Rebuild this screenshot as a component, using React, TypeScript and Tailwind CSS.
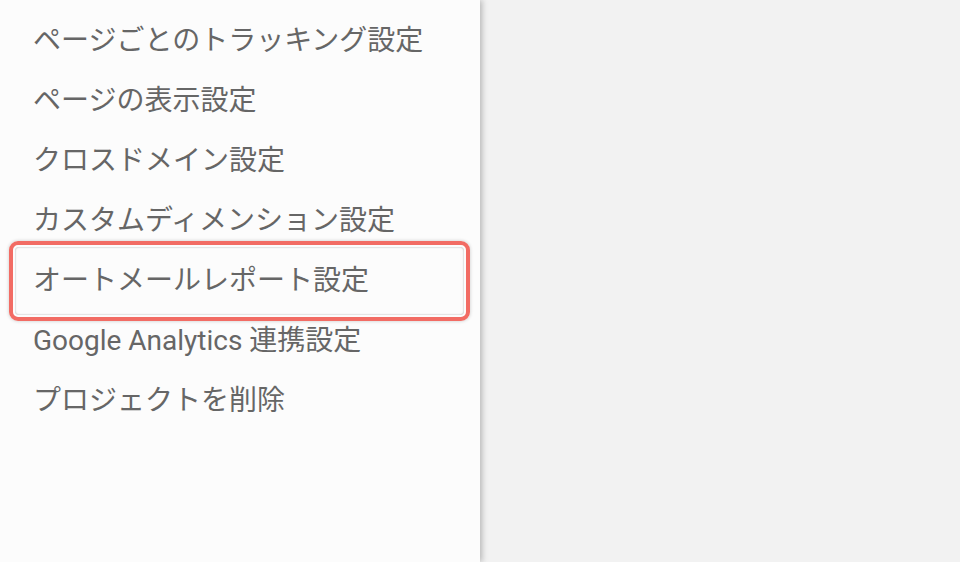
import React from 'react';

const items = [
  'ページごとのトラッキング設定',
  'ページの表示設定',
  'クロスドメイン設定',
  'カスタムディメンション設定',
  'オートメールレポート設定',
  'Google Analytics 連携設定',
  'プロジェクトを削除',
];

export default function App() {
  return (
    <div
      className="flex w-full h-[562px] overflow-hidden bg-[#f2f2f2]"
      style={{ fontFamily: 'Roboto, "Noto Sans CJK JP", sans-serif' }}
    >
      <aside className="relative z-10 w-[480px] shrink-0 h-full bg-[#fcfcfc] shadow-[2px_0_6px_rgba(0,0,0,0.25)]">
        <ul className="pt-[11px]">
          {items.map((label, i) => (
            <li key={label} className="relative h-[60px] flex items-center pl-[33px] text-[28px] text-[#666666] leading-none">
              {i === 4 && (
                <div className="absolute left-[9px] right-[10px] top-[-10px] bottom-[-10px] rounded-[9px] border-4 border-[#f26c64] shadow-[0_0_3px_1px_rgba(0,0,0,0.12)]">
                  <div className="absolute inset-[2px] rounded-[4px] shadow-[inset_0_0_2px_rgba(0,0,0,0.35)]" />
                </div>
              )}
              <span className="relative">{label}</span>
            </li>
          ))}
        </ul>
      </aside>
      <main className="flex-1 h-full bg-[#f2f2f2]" />
    </div>
  );
}
